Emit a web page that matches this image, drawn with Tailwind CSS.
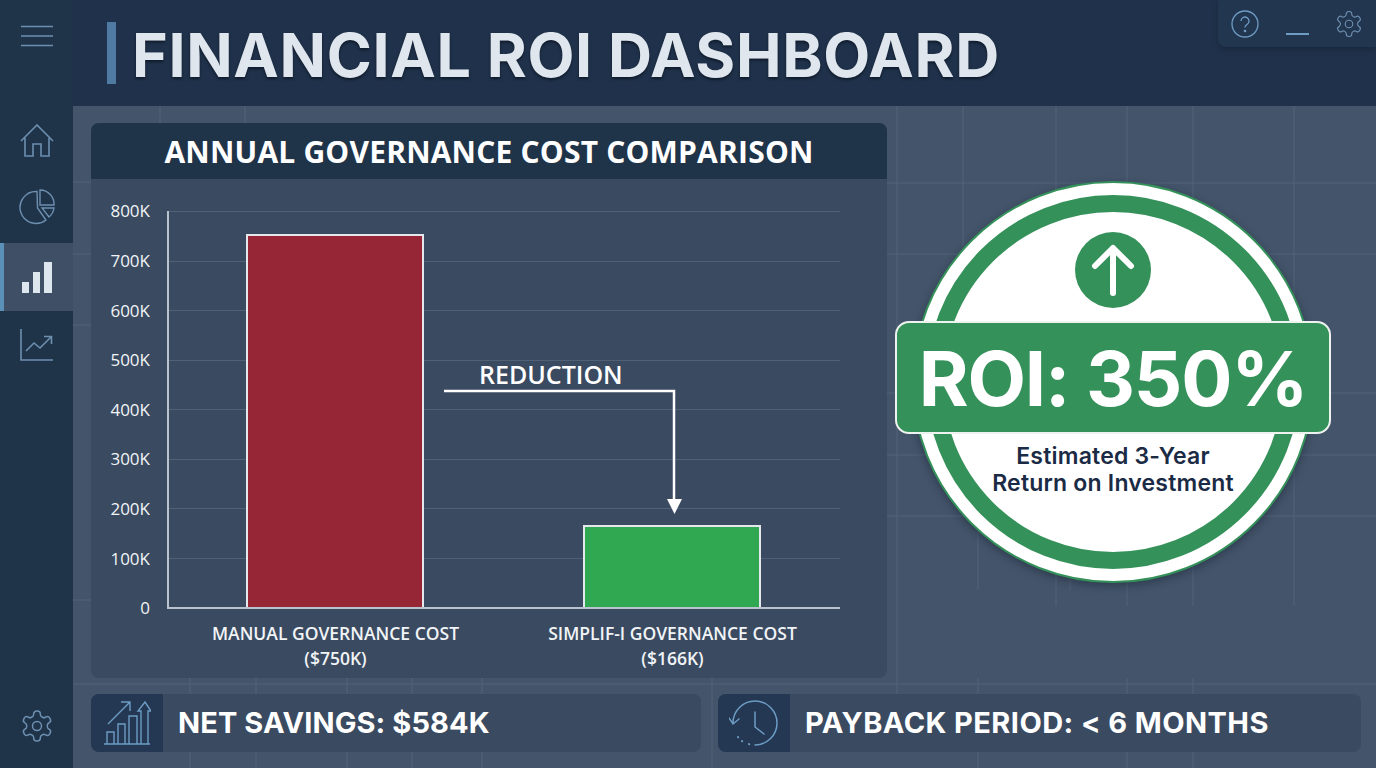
<!DOCTYPE html>
<html lang="en">
<head>
  <meta charset="UTF-8" />
  <meta name="viewport" content="width=device-width, initial-scale=1.0"/>
  <title>Financial ROI Dashboard</title>
  <script src="https://cdn.jsdelivr.net/npm/@tailwindcss/browser@4"></script>
</head>
<body class="w-[1376px] h-[768px] overflow-hidden flex bg-[#44546a] font-['Inter','Liberation_Sans',sans-serif]">

  <!-- sidebar -->
  <aside class="w-[73px] h-full shrink-0 flex flex-col bg-[#1f3349] z-10">
    <div class="h-[71px] flex items-center justify-center">
      <svg width="34" height="24" viewBox="0 0 34 24" fill="none" stroke="#6d8fb0" stroke-width="1.6"><path d="M1 2.500h32M1 12h32M1 21.500h32"/></svg>
    </div>
    <div class="h-[172px] flex flex-col items-center pt-[53px] gap-[31px]">
      <svg width="34" height="34" viewBox="0 0 34 34" fill="none" stroke="#6d8fb0" stroke-width="1.6"><path d="M1 17L17 1l16 16M5 14v18h8V20h8v12h8V14"/></svg>
      <svg width="36" height="36" viewBox="0 0 36 36" fill="none" stroke="#6d8fb0" stroke-width="1.4"><path d="M18 2.500A16 16 0 1 0 27 31L18.500 19z"/><path d="M21 1a14 14 0 0 1 14 15H21z"/><path d="M23 19h12a14 14 0 0 1-5 9z"/></svg>
    </div>
    <div class="h-[68px] bg-[#3f4f66] border-l-4 border-[#5b90b8] flex items-center justify-center pr-[4px]">
      <svg width="32" height="33" viewBox="0 0 32 33" fill="#dfe7ee"><rect x="1" y="21" width="7" height="11"/><rect x="12" y="11" width="7" height="21"/><rect x="23" y="1" width="8" height="31"/></svg>
    </div>
    <div class="flex-1 flex flex-col items-center justify-between pt-[17px] pb-[24px]">
      <svg width="34" height="34" viewBox="0 0 34 34" fill="none" stroke="#6d8fb0" stroke-width="1.6"><path d="M1 1v31h32"/><path d="M6 23l8-8 6 5 11-11M24 8.500h7.500V16"/></svg>
      <svg width="36" height="36" viewBox="0 0 24 24" fill="none" stroke="#6d8fb0" stroke-width="1"><path d="M12.220 2h-.44a2 2 0 0 0-2 2v.18a2 2 0 0 1-1 1.730l-.43.25a2 2 0 0 1-2 0l-.15-.08a2 2 0 0 0-2.730.73l-.22.38a2 2 0 0 0 .73 2.730l.15.1a2 2 0 0 1 1 1.720v.51a2 2 0 0 1-1 1.740l-.15.09a2 2 0 0 0-.73 2.730l.22.38a2 2 0 0 0 2.730.73l.15-.08a2 2 0 0 1 2 0l.43.25a2 2 0 0 1 1 1.730V20a2 2 0 0 0 2 2h.44a2 2 0 0 0 2-2v-.18a2 2 0 0 1 1-1.730l.43-.25a2 2 0 0 1 2 0l.15.08a2 2 0 0 0 2.730-.73l.22-.39a2 2 0 0 0-.73-2.730l-.15-.08a2 2 0 0 1-1-1.740v-.5a2 2 0 0 1 1-1.740l.15-.09a2 2 0 0 0 .73-2.730l-.22-.38a2 2 0 0 0-2.730-.73l-.15.08a2 2 0 0 1-2 0l-.43-.25a2 2 0 0 1-1-1.730V4a2 2 0 0 0-2-2z"/><circle cx="12" cy="12" r="3"/></svg>
    </div>
  </aside>

  <div class="relative flex-1 flex flex-col min-w-0">
    <!-- faint backdrop grid -->
    <svg class="absolute left-0 top-0" width="1303" height="768" fill="none" stroke="#52637a" stroke-width="1">
      <path d="M87 106v20M172 106v20M824 106v600M890 106v140M983 106v500M1054 106v500M1120 106v500M1221 106v500M905 390v200M997 530v60"/>
      <path d="M0 182h18M0 254h18M0 325h18M0 600h18M814 183h489M814 254h489M814 393h489M814 455h489M814 516h489M0 684h1303"/>
      <path d="M117 678v90M183 678v90M274 678v90M339 678v90M409 678v90M639 678v90M905 678v90M1054 678v90M1120 678v90"/>
    </svg>

    <!-- header -->
    <header class="relative h-[106px] shrink-0 bg-[#20324b] flex items-center pl-[34px]">
      <div class="w-[9px] h-[62px] bg-[#4f7ba3]"></div>
      <h1 class="ml-[16px] mt-[5px] text-[61px] leading-none font-bold tracking-[0.65px] whitespace-nowrap text-[#dfe6ee] [text-shadow:0_2px_3px_rgba(10,20,35,0.8)]">FINANCIAL ROI DASHBOARD</h1>
      <div class="absolute right-0 top-0 w-[158px] h-[47px] rounded-bl-lg bg-[#233650] shadow-[0_2px_6px_rgba(10,20,35,0.35)] flex items-center pl-[13px]">
        <svg width="28" height="28" viewBox="0 0 28 28" fill="none" stroke="#6d9cc4" stroke-width="1.300"><circle cx="14" cy="14" r="13"/><path d="M10 11a4 4 0 1 1 6 3.500c-1.300.8-2 1.400-2 3"/><circle cx="14" cy="21" r=".7" fill="#6d9cc4"/></svg>
        <div class="ml-[27px] mt-[21px] w-[23px] h-[1.500px] bg-[#6d9cc4]"></div>
        <svg class="ml-[25px]" width="30" height="30" viewBox="0 0 24 24" fill="none" stroke="#6d8fb0" stroke-width=".9"><path d="M12.220 2h-.44a2 2 0 0 0-2 2v.18a2 2 0 0 1-1 1.730l-.43.25a2 2 0 0 1-2 0l-.15-.08a2 2 0 0 0-2.730.73l-.22.38a2 2 0 0 0 .73 2.730l.15.1a2 2 0 0 1 1 1.720v.51a2 2 0 0 1-1 1.740l-.15.09a2 2 0 0 0-.73 2.730l.22.38a2 2 0 0 0 2.730.73l.15-.08a2 2 0 0 1 2 0l.43.25a2 2 0 0 1 1 1.730V20a2 2 0 0 0 2 2h.44a2 2 0 0 0 2-2v-.18a2 2 0 0 1 1-1.730l.43-.25a2 2 0 0 1 2 0l.15.08a2 2 0 0 0 2.730-.73l.22-.39a2 2 0 0 0-.73-2.730l-.15-.08a2 2 0 0 1-1-1.740v-.5a2 2 0 0 1 1-1.740l.15-.09a2 2 0 0 0 .73-2.730l-.22-.38a2 2 0 0 0-2.730-.73l-.15.08a2 2 0 0 1-2 0l-.43-.25a2 2 0 0 1-1-1.730V4a2 2 0 0 0-2-2z"/><circle cx="12" cy="12" r="3"/></svg>
      </div>
    </header>

    <main class="relative flex-1 flex flex-col pt-[17px] pl-[18px] pr-[15px]">
      <div class="flex h-[555px]">
        <!-- chart card -->
        <section class="w-[796px] h-full shrink-0 rounded-lg bg-[#3a4a60] overflow-hidden font-['Open_Sans','Liberation_Sans',sans-serif] text-[#f1f4f7]">
          <h2 class="h-[56px] bg-[#1f3349] flex items-center justify-center text-[30px] font-bold tracking-[0.2px] whitespace-nowrap text-white">ANNUAL GOVERNANCE COST COMPARISON</h2>
          <div class="flex pt-[32px] pl-[20px]">
            <div class="w-[39px] h-[397px] flex flex-col justify-between items-end text-[17px]">
              <span class="h-0 flex items-center">800K</span>
              <span class="h-0 flex items-center">700K</span>
              <span class="h-0 flex items-center">600K</span>
              <span class="h-0 flex items-center">500K</span>
              <span class="h-0 flex items-center">400K</span>
              <span class="h-0 flex items-center">300K</span>
              <span class="h-0 flex items-center">200K</span>
              <span class="h-0 flex items-center">100K</span>
              <span class="h-0 flex items-center">0</span>
            </div>
            <div class="ml-[17px]">
              <div class="relative w-[673px] h-[398px] border-l-2 border-b-2 border-[#b9c2cd]">
                <div class="absolute inset-0 flex flex-col justify-between pb-[48px]">
                  <div class="h-px bg-[#506176]"></div>
                  <div class="h-px bg-[#506176]"></div>
                  <div class="h-px bg-[#506176]"></div>
                  <div class="h-px bg-[#506176]"></div>
                  <div class="h-px bg-[#506176]"></div>
                  <div class="h-px bg-[#506176]"></div>
                  <div class="h-px bg-[#506176]"></div>
                  <div class="h-px bg-[#506176]"></div>
                </div>
                <div class="relative h-full flex items-end pl-[77px] gap-[159px]">
                  <div class="w-[178px] h-[373px] bg-[#962636] border-2 border-b-0 border-[#e4e7eb]"></div>
                  <div class="w-[178px] h-[82px] bg-[#2fa851] border-2 border-b-0 border-[#e4e7eb]"></div>
                </div>
                <span class="absolute left-[310px] top-[148px] text-[25px] leading-[30px] font-semibold whitespace-nowrap text-white">REDUCTION</span>
                <svg class="absolute left-[275px] top-[178px]" width="240" height="128" fill="none"><path d="M0 2h230v108" stroke="#fff" stroke-width="2.500"/><path d="M223 110h15l-7.500 15z" fill="#fff"/></svg>
              </div>
              <div class="flex mt-[12px] text-[17.500px] leading-[25px] font-semibold text-center">
                <p class="w-[337px]">MANUAL GOVERNANCE COST<br>($750K)</p>
                <p class="w-[337px]">SIMPLIF-I GOVERNANCE COST<br>($166K)</p>
              </div>
            </div>
          </div>
        </section>

        <!-- ROI badge -->
        <div class="ml-[25px] mt-[58px] w-[402px] h-[402px] shrink-0 rounded-full bg-white border-2 border-[#35915a] p-[12px] shadow-[0_3px_8px_rgba(15,25,40,0.4)]">
          <div class="w-full h-full rounded-full border-[17px] border-[#35915a] flex flex-col items-center">
            <div class="mt-[20px] w-[76px] h-[76px] shrink-0 rounded-full bg-[#35915a] flex items-center justify-center">
              <svg width="44" height="54" viewBox="0 0 44 54" fill="none" stroke="#fff" stroke-width="6" stroke-linecap="round" stroke-linejoin="round"><path d="M22 50V5M4 23L22 5l18 18"/></svg>
            </div>
            <div class="mt-[13px] w-[436px] h-[113px] shrink-0 rounded-[14px] bg-[#35915a] border-2 border-[#eef3f0] flex items-center justify-center text-white text-[76px] font-bold tracking-[-1.200px] leading-none">ROI: 350%</div>
            <p class="mt-[9px] text-center text-[23px] leading-[27px] font-semibold tracking-[0.2px] whitespace-nowrap text-[#1b2a45]">Estimated 3-Year<br>Return on Investment</p>
          </div>
        </div>
      </div>

      <!-- bottom stats -->
      <div class="relative flex mt-[16px] gap-[17px] h-[58px] text-white text-[29px] font-bold">
        <div class="w-[610px] rounded-lg bg-[#3a4a60] overflow-hidden flex items-center">
          <div class="w-[72px] h-full bg-[#243853] flex items-center justify-center">
            <svg width="48" height="46" viewBox="0 0 48 46" fill="none" stroke="#6d9cc4" stroke-width="1.400"><path d="M1 44h46M4 44V32h7v12M15 44V24h7v20M26 44V16h8v28M5 24L27 2M18 2h9v9M38 44V11h-3l7-9 6 9h-3v33" /></svg>
          </div>
          <span class="ml-[15px] tracking-[0.1px] whitespace-nowrap">NET SAVINGS: $584K</span>
        </div>
        <div class="w-[643px] rounded-lg bg-[#3a4a60] overflow-hidden flex items-center">
          <div class="w-[72px] h-full bg-[#243853] flex items-center justify-center">
            <svg width="50" height="48" viewBox="0 0 50 48" fill="none" stroke="#6d9cc4" stroke-width="1.500" stroke-linecap="round"><path d="M26 46A22 22 0 1 0 4 24M0 19l4 6 6-5"/><path d="M26 13v15l9 7"/><path d="M9 38l.2.2M13 42l.2.2M20 45l.2.2" stroke-width="2"/></svg>
          </div>
          <span class="ml-[15px] tracking-[0.42px] whitespace-nowrap">PAYBACK PERIOD: &lt; 6 MONTHS</span>
        </div>
      </div>
    </main>
  </div>
</body>
</html>
